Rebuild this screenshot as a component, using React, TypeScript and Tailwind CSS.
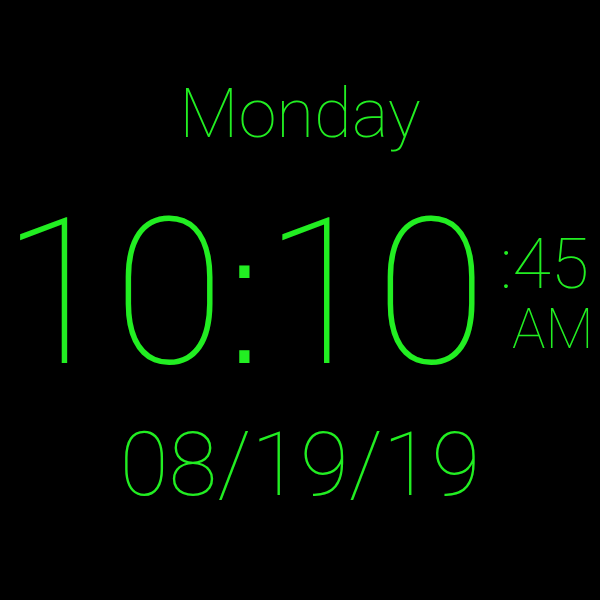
export default function App() {
  return (
    <div
      className="w-[600px] h-[600px] bg-black text-[#22ee22] flex flex-col items-center overflow-hidden"
      style={{ fontFamily: "Roboto, 'Noto Sans', sans-serif" }}
    >
      <div className="mt-[79px] text-[69px] leading-none font-thin">Monday</div>
      <div className="mt-[43px] flex items-start pr-[5px]">
        <div className="text-[204px] leading-none font-thin">
          10
          <span
            className="font-extralight mx-[-15px]"
            style={{ fontFamily: "'DejaVu Sans', sans-serif" }}
          >
            :
          </span>
          10
        </div>
        <div className="flex flex-col items-start ml-[13px] mt-[38px]">
          <div className="text-[70px] leading-none font-thin">:45</div>
          <div className="text-[56px] leading-none font-thin mt-[2px] ml-[12px]">AM</div>
        </div>
      </div>
      <div className="mt-[24px] text-[89px] leading-none font-thin">08/19/19</div>
    </div>
  );
}
